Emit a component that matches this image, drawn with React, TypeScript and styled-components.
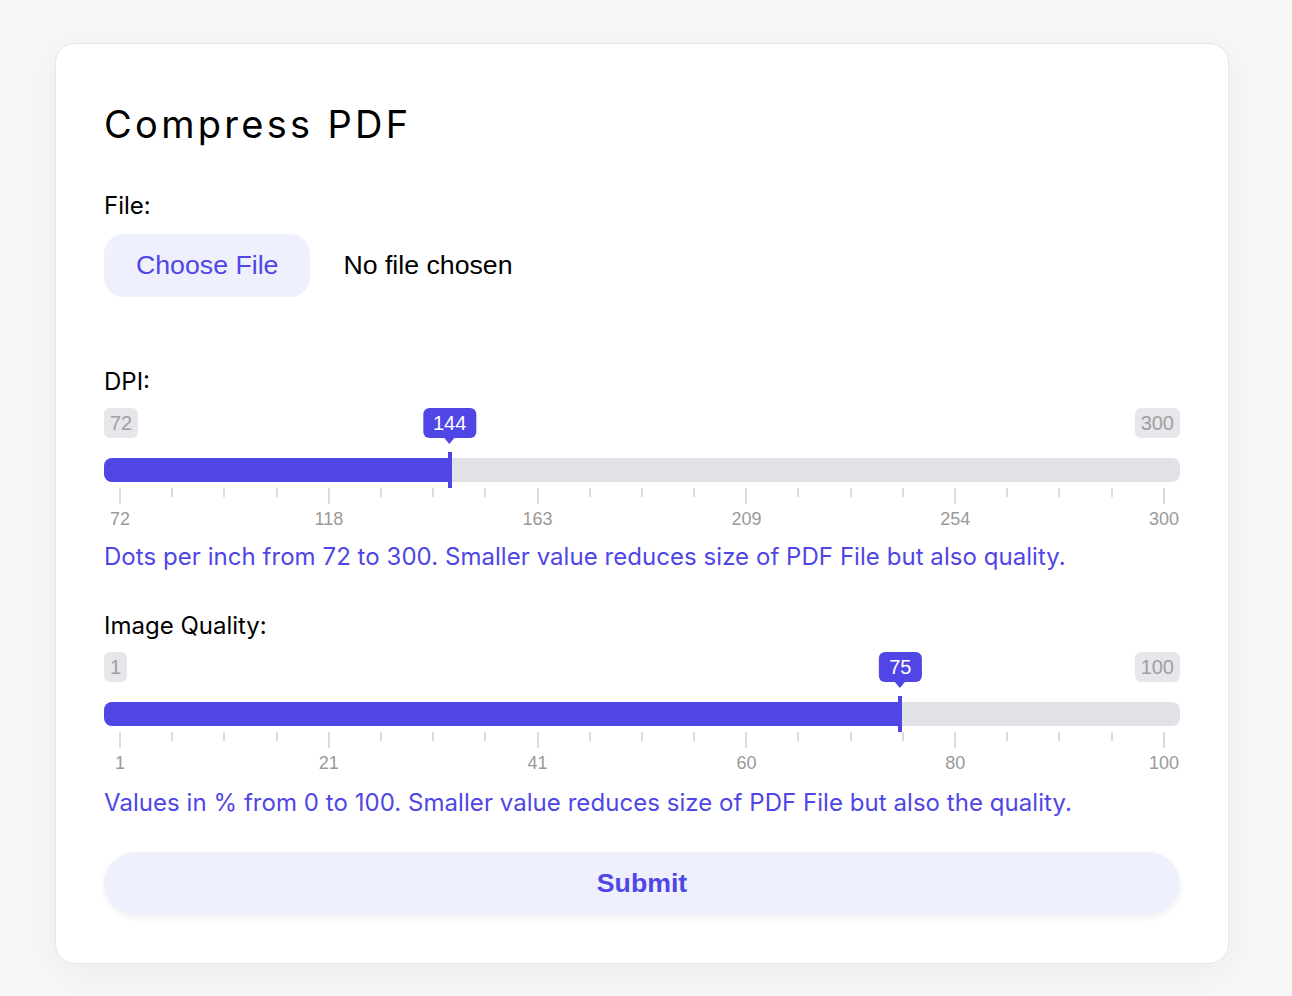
import React from 'react'
import styled, { createGlobalStyle } from 'styled-components'

const GlobalStyle = createGlobalStyle`
  html, body {
    margin: 0;
    padding: 0;
    background: #f7f7f8;
  }
  * { box-sizing: border-box; }
`

interface SliderProps {
  label: string
  min: number
  max: number
  value: number
  marks: number[]
  hint: string
}

const TICK_COUNT = 21

function RangeField({ label, min, max, value, marks, hint }: SliderProps) {
  const pct = (value - min) / (max - min)
  // thumb travels on the inner span, 16px in from each end of the track
  const pos = `calc(16px + (100% - 32px) * ${pct})`

  return (
    <Field>
      <Label>{label}</Label>
      <BadgeRow>
        <EdgeBadge>{min}</EdgeBadge>
        <ValueBadge style={{ left: pos }}>{value}</ValueBadge>
        <EdgeBadge>{max}</EdgeBadge>
      </BadgeRow>
      <Track>
        <Fill style={{ width: pos }} />
        <Thumb style={{ left: pos }} />
      </Track>
      <Ticks>
        {Array.from({ length: TICK_COUNT }).map((_, i) => (
          <Tick key={i} $major={i % 4 === 0} />
        ))}
      </Ticks>
      <TickLabels>
        {marks.map(m => (
          <TickLabel key={m}>
            <span>{m}</span>
          </TickLabel>
        ))}
      </TickLabels>
      <Hint>{hint}</Hint>
    </Field>
  )
}

export default function App() {
  return (
    <Page>
      <GlobalStyle />
      <Card>
        <Title>Compress PDF</Title>
        <Label>File:</Label>
        <FileRow>
          <ChooseButton type="button">Choose File</ChooseButton>
          <FileName>No file chosen</FileName>
        </FileRow>
        <RangeField
          label="DPI:"
          min={72}
          max={300}
          value={144}
          marks={[72, 118, 163, 209, 254, 300]}
          hint="Dots per inch from 72 to 300. Smaller value reduces size of PDF File but also quality."
        />
        <RangeField
          label="Image Quality:"
          min={1}
          max={100}
          value={75}
          marks={[1, 21, 41, 60, 80, 100]}
          hint="Values in % from 0 to 100. Smaller value reduces size of PDF File but also the quality."
        />
        <SubmitButton type="button">Submit</SubmitButton>
      </Card>
    </Page>
  )
}

const Page = styled.div`
  min-height: 996px;
  padding: 43px 63px 32px 55px;
`

const Card = styled.div`
  display: flex;
  flex-direction: column;
  background: #fff;
  border: 1px solid #e5e7eb;
  border-radius: 20px;
  box-shadow: 0 8px 36px rgba(0, 0, 0, 0.05);
  padding: 48px;
  font-family: Inter, 'Noto Sans', sans-serif;
  color: #000;
`

const Title = styled.h1`
  margin: 9px 0 44px;
  font-size: 38px;
  line-height: 46px;
  font-weight: 400;
  letter-spacing: 3.3px;
`

const Label = styled.div`
  font-size: 24px;
  line-height: 30px;
  font-weight: 400;
`

const FileRow = styled.div`
  display: flex;
  align-items: center;
  gap: 33px;
  margin-top: 13px;
  margin-bottom: 70px;
  font-family: 'Liberation Sans', Arial, sans-serif;
  font-size: 26.7px;
`

const ChooseButton = styled.button`
  height: 63px;
  padding: 0 32px;
  border: none;
  border-radius: 20px;
  background: #eef0fd;
  color: #4f46e5;
  font: inherit;
  cursor: pointer;
`

const FileName = styled.span`
  color: #000;
`

const Field = styled.div`
  display: flex;
  flex-direction: column;
  margin-bottom: 38px;

  & + & {
    margin-bottom: 33px;
  }
`

const BadgeRow = styled.div`
  position: relative;
  display: flex;
  justify-content: space-between;
  margin-top: 11px;
  height: 30px;
  font-family: 'Liberation Sans', Arial, sans-serif;
  font-size: 20px;
`

const EdgeBadge = styled.span`
  display: flex;
  align-items: center;
  height: 30px;
  padding: 0 6px;
  border-radius: 6px;
  background: #e5e7eb;
  color: #9f9f9f;
`

const ValueBadge = styled.span`
  position: absolute;
  top: 0;
  transform: translateX(-50%);
  display: flex;
  align-items: center;
  height: 30px;
  padding: 0 10px;
  border-radius: 6px;
  background: #4f46e5;
  color: #fff;

  &::after {
    content: '';
    position: absolute;
    left: 50%;
    top: 100%;
    transform: translateX(-50%);
    border-left: 5px solid transparent;
    border-right: 5px solid transparent;
    border-top: 6px solid #4f46e5;
  }
`

const Track = styled.div`
  position: relative;
  height: 24px;
  margin-top: 20px;
  border-radius: 8px;
  background: #e1e3e8;
`

const Fill = styled.div`
  height: 100%;
  border-radius: 8px 0 0 8px;
  background: #4f46e5;
`

const Thumb = styled.div`
  position: absolute;
  top: -6px;
  width: 4px;
  height: 36px;
  transform: translateX(-50%);
  background: #4f46e5;
`

const Ticks = styled.div`
  display: flex;
  justify-content: space-between;
  align-items: flex-start;
  padding: 0 15px;
  margin-top: 6px;
  height: 16px;
`

const Tick = styled.div<{ $major: boolean }>`
  width: 2px;
  height: ${({ $major }) => ($major ? '16px' : '9px')};
  background: #d9dbe0;
`

const TickLabels = styled.div`
  display: flex;
  justify-content: space-between;
  padding: 0 16px;
  margin-top: 5px;
  height: 20px;
  font-family: 'Liberation Sans', Arial, sans-serif;
  font-size: 18px;
  line-height: 20px;
  color: #9a9a9a;
`

const TickLabel = styled.div`
  width: 0;
  display: flex;
  justify-content: center;
  white-space: nowrap;
`

const Hint = styled.div`
  margin-top: 12px;
  font-size: 24px;
  line-height: 32px;
  letter-spacing: 0.05px;
  color: #4f46e5;

  ${Field} + ${Field} & {
    margin-top: 14px;
  }
`

const SubmitButton = styled.button`
  height: 63px;
  border: none;
  border-radius: 32px;
  background: #eef0fd;
  box-shadow: 0 3px 6px rgba(0, 0, 0, 0.06);
  color: #4f46e5;
  font-family: 'Liberation Sans', Arial, sans-serif;
  font-size: 26.7px;
  font-weight: 700;
  cursor: pointer;
`
